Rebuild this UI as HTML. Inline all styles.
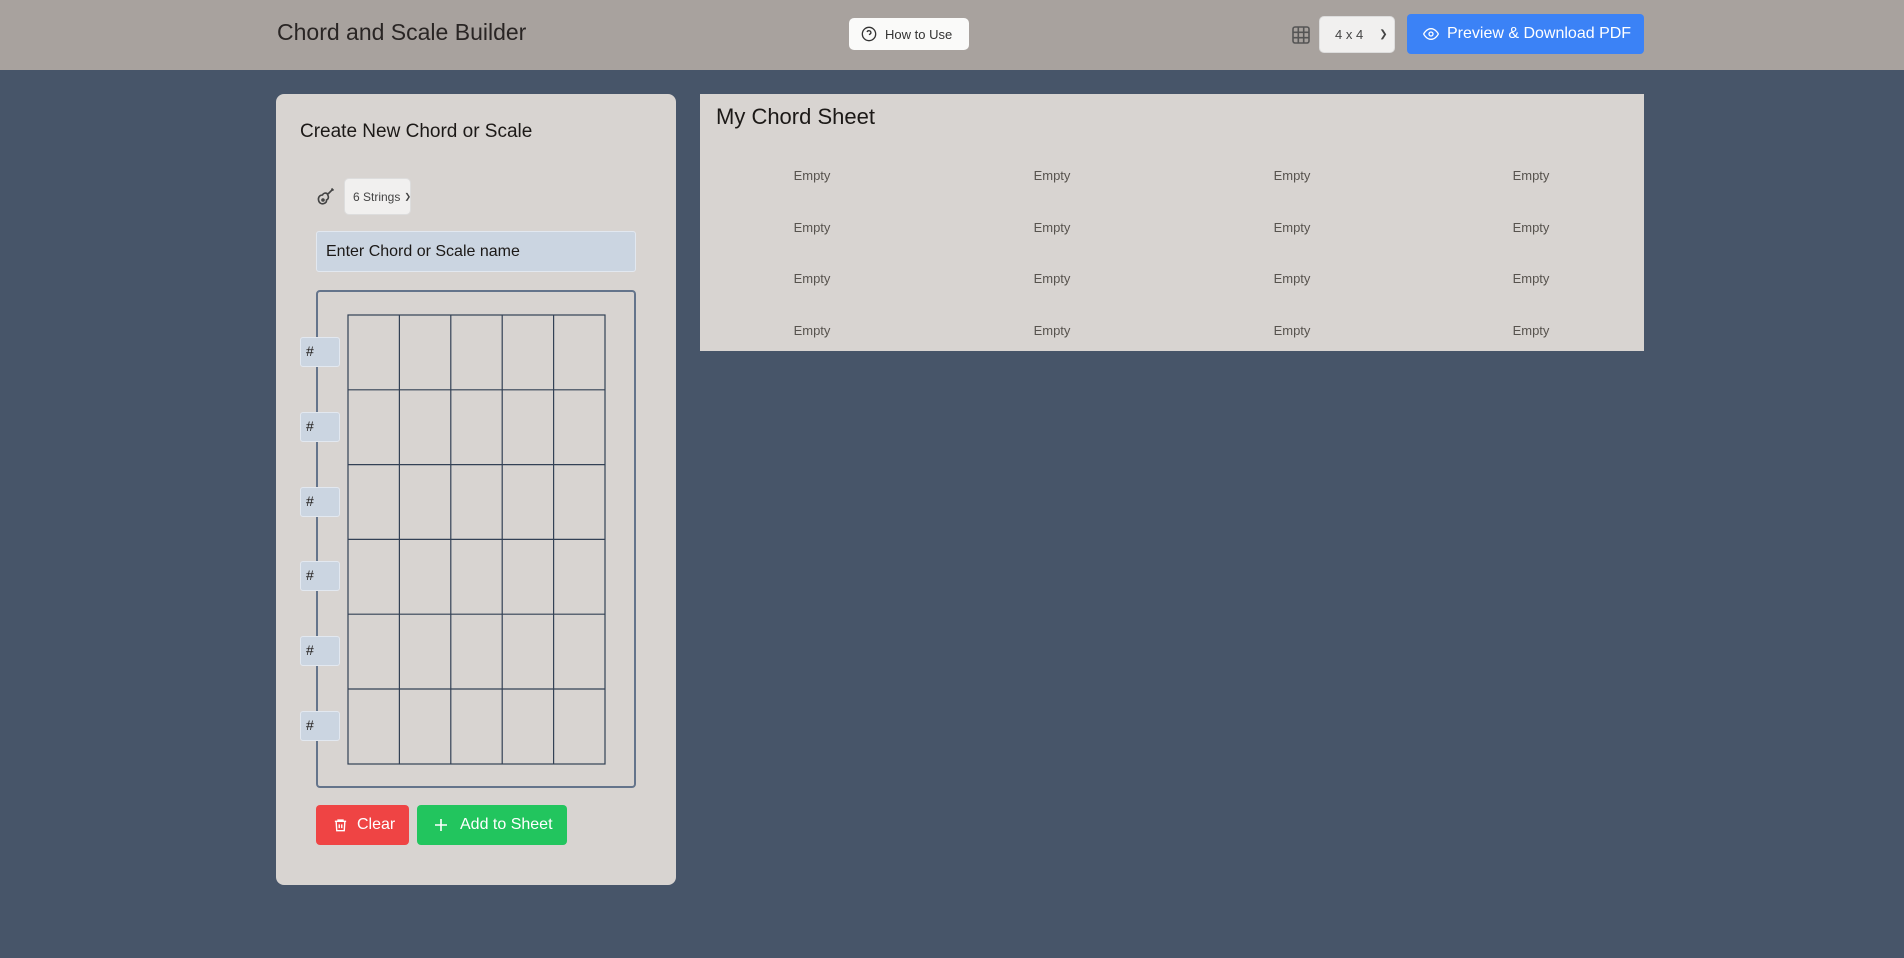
<!DOCTYPE html>
<html><head><meta charset="utf-8"><style>
*{box-sizing:border-box;margin:0;padding:0}
body{width:1904px;height:958px;background:#475569;font-family:"Liberation Sans",sans-serif;position:relative;overflow:hidden;color:#1c1917}
.a{position:absolute;white-space:nowrap}
.hdr{left:0;top:0;width:1904px;height:70px;background:#a8a29e}
.sel{background:#f1f0ef;border:1px solid #ddd;border-radius:5px;font-size:13px;color:#444;display:flex;align-items:center}
.empty{font-size:13px;color:#57534e;width:80px;text-align:center}
.fret{width:40px;height:30px;background:#cbd5e1;border:1px solid #e2e8f0;border-radius:3px;font-size:14px;padding:5px 0 0 5px}
</style></head><body>
<div class="a hdr"></div>
<div class="a" style="left:277px;top:19px;font-size:23px;color:#292524">Chord and Scale Builder</div>
<div class="a" style="left:849px;top:18px;width:120px;height:32px;background:#fafaf9;border-radius:5px;font-size:13px;color:#333;display:flex;align-items:center;padding-left:12px">
<svg width="16" height="16" viewBox="0 0 24 24" fill="none" stroke="#333" stroke-width="2"><circle cx="12" cy="12" r="10"/><path d="M9.1 9a3 3 0 0 1 5.8 1c0 2-3 3-3 3M12 17h.01"/></svg><span style="margin-left:8px">How to Use</span></div>
<svg class="a" style="left:1292px;top:26px" width="18" height="18" viewBox="0 0 18 18" fill="none" stroke="#555" stroke-width="1.6"><rect x="1" y="1" width="16" height="16" rx="2"/><path d="M6.3 1v16M11.7 1v16M1 6.3h16M1 11.7h16"/></svg>
<div class="a sel" style="left:1319px;top:16px;width:76px;height:37px;padding-left:15px">4 x 4<span style="margin-left:16px;font-size:10px">&#10095;</span></div>
<div class="a" style="left:1407px;top:14px;width:237px;height:40px;background:#3b82f6;border-radius:4px;color:#fff;font-size:16px;display:flex;align-items:center;padding-left:16px">
<svg width="16" height="16" viewBox="0 0 24 24" fill="none" stroke="#fff" stroke-width="2"><path d="M1 12s4-8 11-8 11 8 11 8-4 8-11 8S1 12 1 12z"/><circle cx="12" cy="12" r="3"/></svg><span style="margin-left:8px">Preview &amp; Download PDF</span></div>

<div class="a" style="left:276px;top:94px;width:400px;height:791px;background:#d8d4d1;border-radius:8px"></div>
<div class="a" style="left:300px;top:121px;font-size:19px;color:#1c1917">Create New Chord or Scale</div>
<svg class="a" style="left:316px;top:186px" width="20" height="20" viewBox="0 0 20 20" fill="none" stroke="#444" stroke-width="1.6"><path d="M12 8l5-5M15.5 2.5l2 2"/><path d="M11 7.5c-2-1-4 0-4.5 1.5C4 9 2 11 2.5 14s3 4.5 5.5 3.5 2.5-2 2.5-3.5c1.5-.5 2.5-2.5 1.5-4.5z"/><circle cx="7" cy="14" r="1"/></svg>
<div class="a sel" style="left:344px;top:178px;width:67px;height:37px;padding-left:8px;font-size:12px;overflow:hidden">6 Strings<span style="margin-left:4px;font-size:8px">&#10095;</span></div>
<div class="a" style="left:316px;top:231px;width:320px;height:41px;background:#cbd5e1;border:1px solid #e2e8f0;border-radius:3px;font-size:16px;padding:11px 0 0 9px;color:#1c1917">Enter Chord or Scale name</div>
<div class="a" style="left:316px;top:290px;width:320px;height:498px;border:2px solid #64748b;border-radius:4px"></div>
<svg class="a" style="left:347px;top:314px" width="260" height="452"><g stroke="#334155" stroke-width="1.2" fill="none"><rect x="1" y="1" width="257" height="449"/>
<path d="M52.4 1v449M103.8 1v449M155.2 1v449M206.6 1v449M1 75.8h257M1 150.6h257M1 225.4h257M1 300.2h257M1 375h257"/></g></svg>
<div class="a fret" style="left:300px;top:337px">#</div>
<div class="a fret" style="left:300px;top:412px">#</div>
<div class="a fret" style="left:300px;top:487px">#</div>
<div class="a fret" style="left:300px;top:561px">#</div>
<div class="a fret" style="left:300px;top:636px">#</div>
<div class="a fret" style="left:300px;top:711px">#</div>
<div class="a" style="left:316px;top:805px;width:93px;height:40px;background:#ef4444;border-radius:4px;color:#fff;font-size:16px;display:flex;align-items:center;padding-left:17px">
<svg width="15" height="16" viewBox="0 0 24 24" fill="none" stroke="#fff" stroke-width="2.2"><path d="M3 6h18M8 6V4h8v2M5 6l1 15h12l1-15M10 11v6M14 11v6"/></svg><span style="margin-left:9px">Clear</span></div>
<div class="a" style="left:417px;top:805px;width:150px;height:40px;background:#22c55e;border-radius:4px;color:#fff;font-size:16px;display:flex;align-items:center;padding-left:17px">
<svg width="14" height="14" viewBox="0 0 14 14" stroke="#fff" stroke-width="1.6"><path d="M7 1v12M1 7h12"/></svg><span style="margin-left:12px">Add to Sheet</span></div>

<div class="a" style="left:700px;top:94px;width:944px;height:257px;background:#d8d4d1"></div>
<div class="a" style="left:716px;top:104px;font-size:22px;color:#1c1917">My Chord Sheet</div>
<div class="a" style="left:0;top:0">
<div class="a empty" style="left:772px;top:168px">Empty</div><div class="a empty" style="left:1012px;top:168px">Empty</div><div class="a empty" style="left:1252px;top:168px">Empty</div><div class="a empty" style="left:1491px;top:168px">Empty</div>
<div class="a empty" style="left:772px;top:220px">Empty</div><div class="a empty" style="left:1012px;top:220px">Empty</div><div class="a empty" style="left:1252px;top:220px">Empty</div><div class="a empty" style="left:1491px;top:220px">Empty</div>
<div class="a empty" style="left:772px;top:271px">Empty</div><div class="a empty" style="left:1012px;top:271px">Empty</div><div class="a empty" style="left:1252px;top:271px">Empty</div><div class="a empty" style="left:1491px;top:271px">Empty</div>
<div class="a empty" style="left:772px;top:323px">Empty</div><div class="a empty" style="left:1012px;top:323px">Empty</div><div class="a empty" style="left:1252px;top:323px">Empty</div><div class="a empty" style="left:1491px;top:323px">Empty</div>
</div>
</body></html>
